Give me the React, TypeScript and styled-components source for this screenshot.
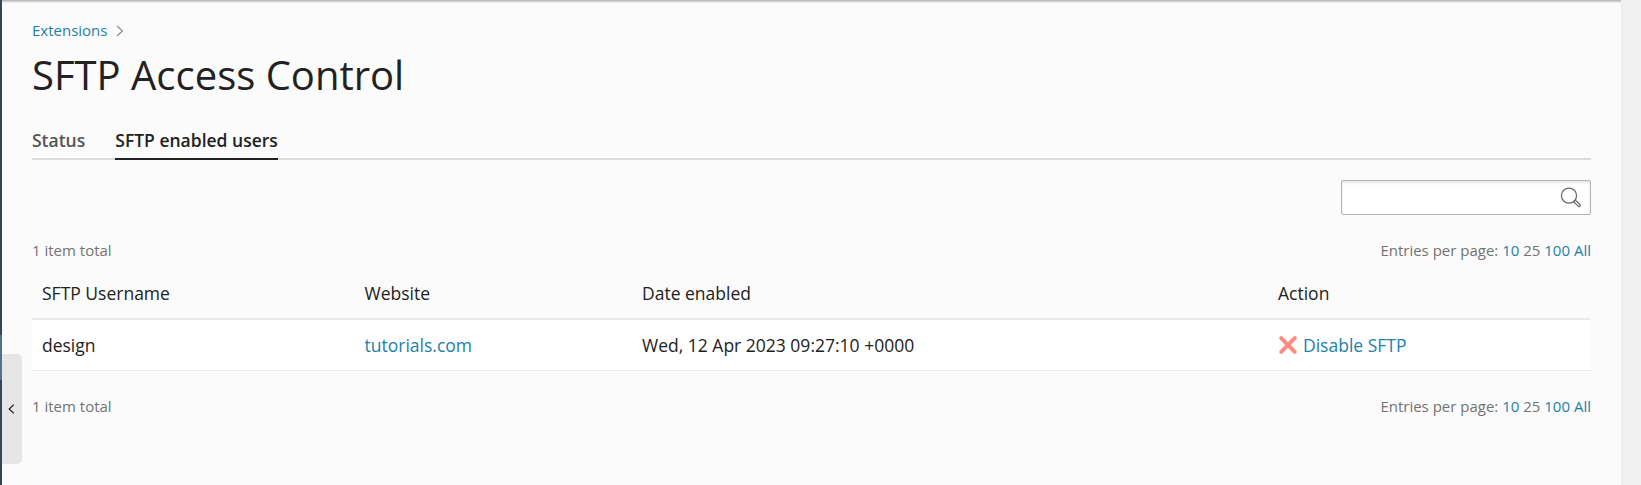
import React from 'react';
import styled, { createGlobalStyle } from 'styled-components';

const GlobalStyle = createGlobalStyle`
  *, *::before, *::after { box-sizing: border-box; }
  body {
    margin: 0;
    background: #f0f0f0;
    font-family: 'Open Sans', 'Noto Sans', sans-serif;
    font-size: 17.5px;
    line-height: 25px;
    color: #222;
  }
`;

const Shell = styled.div`
  display: flex;
  height: 485px;
  overflow: hidden;
`;

const SidebarEdge = styled.div`
  flex: none;
  width: 2px;
  background: linear-gradient(#35455e 0 335px, #557188 335px 380px, #35455e 380px);
`;

const Page = styled.main`
  position: relative;
  width: 1619px;
  padding: 20px 30px 0;
  background: #fbfbfb;
  box-shadow: inset 0 1px 0 #bdbdbd, inset 0 2px 0 #d4d4d4, inset 0 3px 0 #eeeeee;
`;

const CollapseHandle = styled.button`
  position: absolute;
  left: 0;
  top: 354px;
  display: flex;
  align-items: center;
  width: 20px;
  height: 110px;
  padding: 0 0 0 6px;
  border: 0;
  border-radius: 0 5px 5px 0;
  background: #e6e6e6;
`;

const Link = styled.a`
  color: #1b80ae;
  text-decoration: none;
`;

const Breadcrumbs = styled.nav`
  display: flex;
  align-items: center;
  gap: 9px;
  height: 21px;
  font-size: 15px;
  line-height: 21px;
`;

const Title = styled.h1`
  margin: 9px 0 0;
  font-size: 40px;
  line-height: 50px;
  font-weight: 400;
`;

const Tabs = styled.div`
  display: flex;
  gap: 30px;
  height: 40px;
  margin-top: 20px;
  border-bottom: 2px solid #dcdcdc;
`;

const Tab = styled.div<{ $active?: boolean }>`
  height: 40px;
  padding-top: 8px;
  font-weight: 600;
  color: ${({ $active }) => ($active ? '#222' : '#555')};
  border-bottom: 2px solid ${({ $active }) => ($active ? '#222' : 'transparent')};
`;

const SearchRow = styled.div`
  display: flex;
  justify-content: flex-end;
  margin-top: 20px;
`;

const SearchBox = styled.label`
  display: flex;
  align-items: center;
  width: 250px;
  height: 35px;
  padding-right: 8px;
  border: 1px solid #b2b2b2;
  border-radius: 2px;
  background: #fff;
  box-shadow: inset 0 2px 3px rgba(0, 0, 0, 0.1);
`;

const SearchInput = styled.input`
  flex: 1;
  min-width: 0;
  border: 0;
  outline: 0;
  background: transparent;
  font: inherit;
`;

const PagerRow = styled.div<{ $top: number }>`
  display: flex;
  justify-content: space-between;
  margin-top: ${({ $top }) => $top}px;
  font-size: 15px;
  line-height: 20px;
  color: #737373;
`;

const List = styled.div`
  margin-top: 8px;
`;

const Row = styled.div<{ $head?: boolean }>`
  display: grid;
  grid-template-columns: 322.5px 277.5px 636px 1fr;
  align-items: center;
  height: ${({ $head }) => ($head ? 52 : 51)}px;
  padding-left: 10px;
  background: ${({ $head }) => ($head ? 'transparent' : '#fff')};
  border-bottom: ${({ $head }) => ($head ? 2 : 1)}px solid #ebebeb;
`;

const Action = styled(Link)`
  display: flex;
  align-items: center;
  gap: 5px;
`;

const CrossIcon = () => (
  <svg width="20" height="20" viewBox="0 0 20 20" fill="none" stroke="#ff8c80" strokeWidth="4" strokeLinecap="round">
    <path d="M3.2 3.2l13.6 13.6M16.8 3.2L3.2 16.8" />
  </svg>
);

const SearchIcon = () => (
  <svg width="22" height="22" viewBox="0 0 22 22" fill="none" stroke="#6b6b6b" strokeWidth="1.25">
    <circle cx="9" cy="8.6" r="7.6" />
    <path d="M13.6 14.8l1.7-1.7 4.8 4.6c.9.9-.8 2.6-1.7 1.7z" />
  </svg>
);

const Pager = ({ top }: { top: number }) => (
  <PagerRow $top={top}>
    <span>1 item total</span>
    <span>
      Entries per page: <Link>10</Link> 25 <Link>100</Link> <Link>All</Link>
    </span>
  </PagerRow>
);

export default function App() {
  return (
    <>
      <GlobalStyle />
      <Shell>
        <SidebarEdge />
        <Page>
          <Breadcrumbs>
            <Link>Extensions</Link>
            <svg width="8" height="12" viewBox="0 0 8 12" fill="none" stroke="#8c8c8c" strokeWidth="1.2">
              <path d="M1 1l5.4 5L1 11" />
            </svg>
          </Breadcrumbs>
          <Title>SFTP Access Control</Title>
          <Tabs>
            <Tab>Status</Tab>
            <Tab $active>SFTP enabled users</Tab>
          </Tabs>
          <SearchRow>
            <SearchBox>
              <SearchInput aria-label="Search" />
              <SearchIcon />
            </SearchBox>
          </SearchRow>
          <Pager top={25} />
          <List>
            <Row $head>
              <span>SFTP Username</span>
              <span>Website</span>
              <span>Date enabled</span>
              <span>Action</span>
            </Row>
            <Row>
              <span>design</span>
              <Link>tutorials.com</Link>
              <span>Wed, 12 Apr 2023 09:27:10 +0000</span>
              <Action>
                <CrossIcon />
                Disable SFTP
              </Action>
            </Row>
          </List>
          <Pager top={25} />
          <CollapseHandle aria-label="Collapse sidebar">
            <svg width="7" height="10" viewBox="0 0 7 10" fill="none" stroke="#222" strokeWidth="1.3">
              <path d="M5.8.6L1.2 5l4.6 4.4" />
            </svg>
          </CollapseHandle>
        </Page>
      </Shell>
    </>
  );
}
